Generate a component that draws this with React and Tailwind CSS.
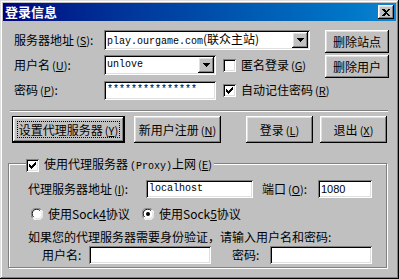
import React from 'react';

const sunken = 'shadow-[inset_1px_1px_#808080,inset_-1px_-1px_#fff,inset_2px_2px_#000,inset_-2px_-2px_#dfdfdf]';
const raised = 'shadow-[inset_-1px_-1px_#000,inset_1px_1px_#fff,inset_-2px_-2px_#808080,inset_2px_2px_#dfdfdf]';
const cjk = "font-['SimSun','Noto_Sans_CJK_SC',sans-serif]";
const mono = "font-['Liberation_Mono','Noto_Sans_CJK_SC',monospace]";

function Check({ checked }) {
  const ticks = [[3, 5], [4, 6], [5, 7], [6, 6], [7, 5], [8, 4], [9, 3]];
  return (
    <span className={`relative inline-block w-[13px] h-[13px] shrink-0 bg-white ${sunken}`}>
      {checked && (
        <svg width="13" height="13" className="absolute left-0 top-0" shapeRendering="crispEdges">
          {ticks.map(([x, y]) => (
            <rect key={x} x={x} y={y} width="1" height="3" fill="#000" />
          ))}
        </svg>
      )}
    </span>
  );
}

function Radio({ checked }) {
  return (
    <svg width="12" height="12" className="shrink-0">
      <circle cx="6" cy="6" r="5.5" fill="#fff" />
      <path d="M1.6 9.9 A5.5 5.5 0 0 1 9.9 1.6" stroke="#808080" fill="none" />
      <path d="M2.5 9 A4.3 4.3 0 0 1 9 2.5" stroke="#000" fill="none" />
      <path d="M10.4 2.1 A5.5 5.5 0 0 1 2.1 10.4" stroke="#fff" fill="none" />
      <path d="M9.5 3 A4.3 4.3 0 0 1 3 9.5" stroke="#dfdfdf" fill="none" />
      {checked && <circle cx="6" cy="6" r="2" fill="#000" />}
    </svg>
  );
}

function DropArrow() {
  return (
    <span className={`flex shrink-0 items-center justify-center w-[16px] h-[16px] bg-[#c0c0c0] ${raised}`}>
      <svg width="7" height="4" shapeRendering="crispEdges">
        <path d="M0 0 H7 L3.5 4 Z" fill="#000" />
      </svg>
    </span>
  );
}

// mnemonic like "(S)" with the letter underlined
function Mn({ k }) {
  return (
    <span className="ml-[2px] text-[11px]">(<span className="underline">{k}</span>)</span>
  );
}

function Btn({ children, w, isDefault }) {
  if (isDefault) {
    return (
      <div className={`flex shrink-0 h-[27px] ${w} border border-black bg-[#c0c0c0]`}>
        <div className={`flex flex-1 items-center justify-center p-[4px] ${raised}`}>
          <div className="flex h-full w-full items-center justify-center border border-dotted border-black">
            {children}
          </div>
        </div>
      </div>
    );
  }
  return (
    <div className={`flex shrink-0 items-center justify-center ${w} bg-[#c0c0c0] ${raised}`}>{children}</div>
  );
}

export default function App() {
  return (
    <div className={`w-[399px] h-[279px] overflow-hidden whitespace-nowrap bg-[#c0c0c0] p-[3px] text-[12px] leading-[14px] text-black ${cjk} shadow-[inset_-1px_-1px_#000,inset_1px_1px_#dfdfdf,inset_-2px_-2px_#808080,inset_2px_2px_#fff]`}>
      <div className="flex h-[18px] items-center justify-between bg-gradient-to-r from-[#000080] to-[#1084d0] pl-[2px] pr-[2px]">
        <span className="text-[13px] font-bold text-white">登录信息</span>
        <span className={`flex h-[14px] w-[16px] items-center justify-center bg-[#c0c0c0] ${raised}`}>
          <svg width="8" height="7" shapeRendering="crispEdges">
            <path d="M0 0 L2 0 L4 2 L6 0 L8 0 L5 3.5 L8 7 L6 7 L4 5 L2 7 L0 7 L3 3.5 Z" fill="#000" />
          </svg>
        </span>
      </div>

      {/* top section */}
      <div className="ml-[11px] mt-[9px] flex">
        <div className="flex w-[296px] shrink-0 flex-col gap-[5px]">
          <div className="flex h-[20px] items-center">
            <span className="w-[90px] shrink-0">服务器地址<Mn k="S" />:</span>
            <div className={`flex h-[20px] w-[206px] shrink-0 items-center justify-between bg-white p-[2px] pl-[3px] ${sunken}`}>
              <span className={`${mono} text-[10px]`}>play.ourgame.com<span className={`${cjk} text-[12px]`}>(联众主站)</span></span>
              <DropArrow />
            </div>
          </div>
          <div className="flex h-[20px] items-center">
            <span className="w-[90px] shrink-0">用户名<Mn k="U" />:</span>
            <div className={`flex h-[20px] w-[112px] shrink-0 items-center justify-between bg-white p-[2px] pl-[3px] ${sunken}`}>
              <span className={`${mono} text-[10px]`}>unlove</span>
              <DropArrow />
            </div>
            <span className="ml-[7px] flex shrink-0"><Check /></span>
            <span className="ml-[5px] shrink-0">匿名登录<Mn k="G" /></span>
          </div>
          <div className="flex h-[20px] items-center">
            <span className="w-[90px] shrink-0">密码<Mn k="P" />:</span>
            <div className={`flex h-[19px] w-[112px] shrink-0 items-center bg-white pl-[3px] ${sunken}`}>
              <span className={`${mono} text-[10px]`}>***************</span>
            </div>
            <span className="ml-[7px] flex shrink-0"><Check checked /></span>
            <span className="ml-[5px] shrink-0">自动记住密码<Mn k="R" /></span>
          </div>
        </div>
        <div className="ml-[15px] flex w-[64px] shrink-0 flex-col gap-[2px]">
          <Btn w="h-[23px] w-[64px]">删除站点</Btn>
          <Btn w="h-[23px] w-[64px]">删除用户</Btn>
        </div>
      </div>

      <div className="ml-[7px] mt-[10px] h-[2px] w-[378px] border-t border-b border-t-[#808080] border-b-white" />

      {/* buttons */}
      <div className="ml-[9px] mt-[4px] flex">
        <Btn w="w-[113px]" isDefault>设置代理服务器<Mn k="Y" /></Btn>
        <div className="ml-[9px] flex">
          <Btn w="h-[27px] w-[87px]">新用户注册<Mn k="N" /></Btn>
        </div>
        <div className="ml-[25px] flex">
          <Btn w="h-[27px] w-[67px]">登录<Mn k="L" /></Btn>
        </div>
        <div className="ml-[7px] flex">
          <Btn w="h-[27px] w-[67px]">退出<Mn k="X" /></Btn>
        </div>
      </div>

      {/* proxy group */}
      <div className="relative ml-[5px] mt-[20px] h-[105px] w-[379px] border border-[#808080] shadow-[1px_1px_0_#fff,inset_1px_1px_0_#fff]">
        <div className="absolute left-[17px] top-[-7px] flex items-center gap-[5px] bg-[#c0c0c0] pr-[2px]">
          <Check checked />
          <span>使用代理服务器<span className={`${mono} ml-[2px] text-[10px]`}>(Proxy)</span>上网<Mn k="E" /></span>
        </div>

        <div className="pl-[19px] pt-[16px]">
          <div className="flex h-[18px] items-center">
            <span className="w-[118px] shrink-0">代理服务器地址<Mn k="I" />:</span>
            <div className={`flex h-[18px] w-[107px] shrink-0 items-center bg-white pl-[3px] ${sunken}`}>
              <span className={`${mono} text-[10px]`}>localhost</span>
            </div>
            <span className="ml-[9px] w-[56px] shrink-0">端口<Mn k="O" />:</span>
            <div className={`flex h-[18px] w-[54px] shrink-0 items-center bg-white pl-[3px] ${sunken}`}>
              <span className="font-['Liberation_Sans',sans-serif] text-[11px]">1080</span>
            </div>
          </div>

          <div className="mt-[9px] ml-[3px] flex h-[13px] items-center">
            <Radio />
            <span className="ml-[5px] w-[94px] shrink-0">使用Sock<span className="underline">4</span>协议</span>
            <Radio checked />
            <span className="ml-[5px]">使用Sock<span className="underline">5</span>协议</span>
          </div>

          <div className="mt-[10px]">如果您的代理服务器需要身份验证，请输入用户名和密码:</div>

          <div className="mt-[2px] ml-[14px] flex h-[18px] items-center">
            <span className="w-[47px] shrink-0">用户名:</span>
            <div className={`h-[18px] w-[122px] shrink-0 bg-white ${sunken}`} />
            <span className="ml-[21px] w-[38px] shrink-0">密码:</span>
            <div className={`h-[18px] w-[102px] shrink-0 bg-white ${sunken}`} />
          </div>
        </div>
      </div>
    </div>
  );
}
